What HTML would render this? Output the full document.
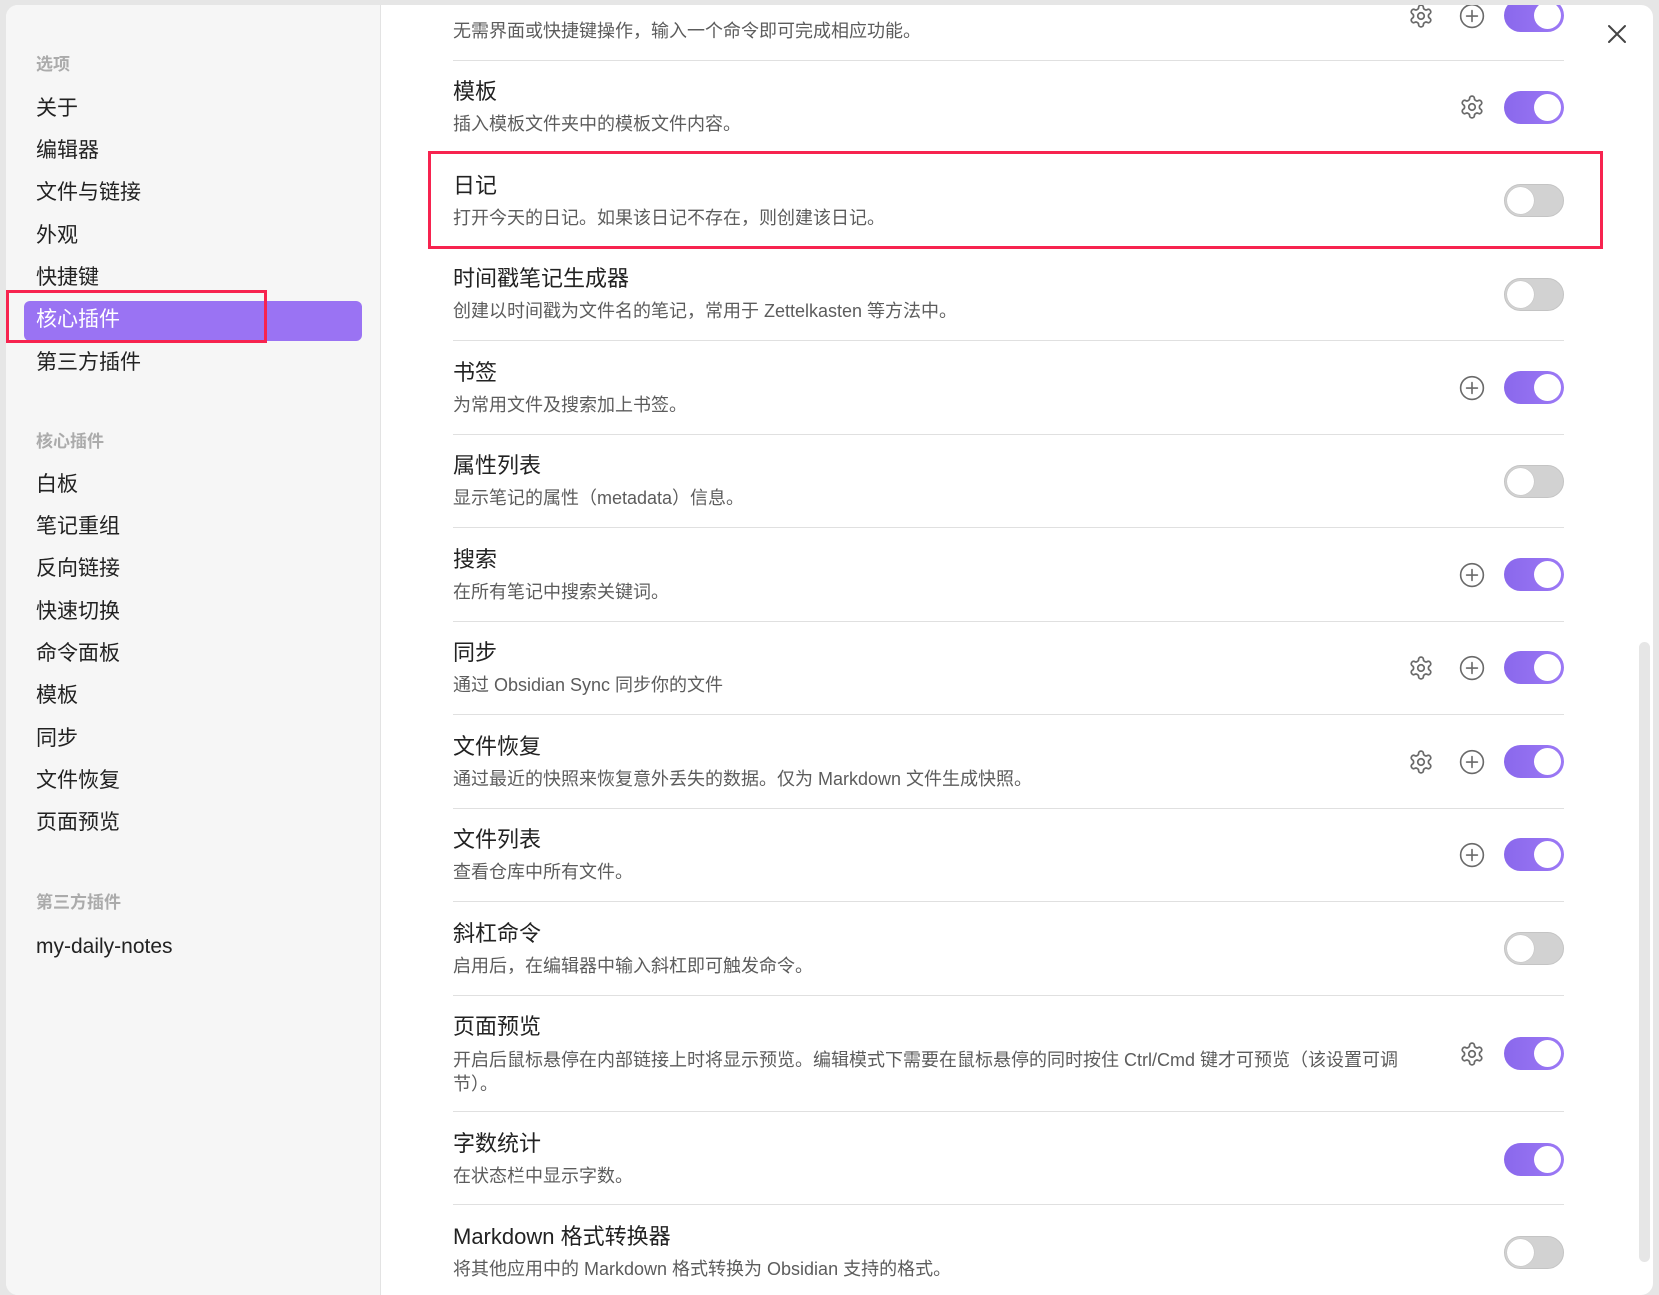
<!DOCTYPE html>
<html><head><meta charset="utf-8">
<style>
*{margin:0;padding:0;box-sizing:border-box}
body{width:1659px;height:1278px;background:#e6e6e6;font-family:"Liberation Sans","Noto Sans CJK SC",sans-serif;overflow:hidden;position:relative}
#modal{position:absolute;left:6px;top:5px;width:1647px;height:1290px;background:#fff;border-radius:12px;overflow:hidden}
#side{position:absolute;left:0;top:0;width:375px;height:100%;background:#f6f6f6;border-right:1px solid #e3e3e3}
.sh{position:absolute;left:30px;font-size:17px;font-weight:bold;color:#ababab;line-height:20px;margin-top:2px}
.si{position:absolute;left:30px;font-size:21px;color:#222;line-height:24px;margin-top:2px}
.act{position:absolute;left:18px;top:296px;width:338px;height:40px;background:#9a73f3;border-radius:6px}
.t{position:absolute;left:447px;font-size:22px;color:#222;line-height:26px;white-space:nowrap;margin-top:1px}
.d{position:absolute;left:447px;font-size:18px;color:#5c5c5c;line-height:24px;white-space:nowrap;margin-top:1px}
.sep{position:absolute;left:447px;width:1111px;height:1px;background:#e0e0e0}
.tg{position:absolute;left:1498px;width:60px;height:33px;border-radius:17px}
.on{background:linear-gradient(90deg,#8a68ec,#9c79f5)}
.on::after{content:"";position:absolute;right:3px;top:3px;width:27px;height:27px;border-radius:50%;background:#fff}
.off{background:#d2d2d2;border:1px solid #c4c4c4}
.off::after{content:"";position:absolute;left:2px;top:2px;width:27px;height:27px;border-radius:50%;background:#fff;box-shadow:0 0 1px #aaa}
.ic{position:absolute;width:26px;height:26px}
.red{position:absolute;border:3px solid #f7234f}
</style></head><body>
<div id="modal">
<div id="side">
<div class="sh" style="top:48px">选项</div>
<div class="si" style="top:90px">关于</div>
<div class="si" style="top:132px">编辑器</div>
<div class="si" style="top:174px">文件与链接</div>
<div class="si" style="top:217px">外观</div>
<div class="si" style="top:259px">快捷键</div>
<div class="act"></div>
<div class="si" style="top:301px;color:#fff">核心插件</div>
<div class="si" style="top:344px">第三方插件</div>
<div class="sh" style="top:425px">核心插件</div>
<div class="si" style="top:466px">白板</div>
<div class="si" style="top:508px">笔记重组</div>
<div class="si" style="top:550px">反向链接</div>
<div class="si" style="top:593px">快速切换</div>
<div class="si" style="top:635px">命令面板</div>
<div class="si" style="top:677px">模板</div>
<div class="si" style="top:720px">同步</div>
<div class="si" style="top:762px">文件恢复</div>
<div class="si" style="top:804px">页面预览</div>
<div class="sh" style="top:886px">第三方插件</div>
<div class="si" style="top:928px">my-daily-notes</div>
</div>

<svg width="0" height="0" style="position:absolute">
<symbol id="gear" viewBox="0 0 24 24"><path fill="none" stroke="#6a6a6a" stroke-width="1.6" stroke-linecap="round" stroke-linejoin="round" d="M12.22 2h-.44a2 2 0 0 0-2 2v.18a2 2 0 0 1-1 1.73l-.43.25a2 2 0 0 1-2 0l-.15-.08a2 2 0 0 0-2.730.73l-.22.38a2 2 0 0 0 .73 2.73l.15.1a2 2 0 0 1 1 1.72v.51a2 2 0 0 1-1 1.74l-.15.09a2 2 0 0 0-.73 2.73l.22.38a2 2 0 0 0 2.73.73l.15-.08a2 2 0 0 1 2 0l.43.25a2 2 0 0 1 1 1.73V20a2 2 0 0 0 2 2h.44a2 2 0 0 0 2-2v-.18a2 2 0 0 1 1-1.73l.43-.25a2 2 0 0 1 2 0l.15.08a2 2 0 0 0 2.73-.73l.22-.39a2 2 0 0 0-.73-2.730l-.15-.08a2 2 0 0 1-1-1.74v-.5a2 2 0 0 1 1-1.74l.15-.09a2 2 0 0 0 .73-2.73l-.22-.38a2 2 0 0 0-2.73-.73l-.15.08a2 2 0 0 1-2 0l-.43-.25a2 2 0 0 1-1-1.73V4a2 2 0 0 0-2-2z"/><circle cx="12" cy="12" r="3" fill="none" stroke="#6a6a6a" stroke-width="1.6"/></symbol>
<symbol id="plus" viewBox="0 0 24 24"><circle cx="12" cy="12" r="10.5" fill="none" stroke="#6a6a6a" stroke-width="1.5"/><path d="M12 7v10M7 12h10" stroke="#6a6a6a" stroke-width="1.5" stroke-linecap="round"/></symbol>
</svg>

<div class="d" style="top:13px">无需界面或快捷键操作，输入一个命令即可完成相应功能。</div>
<svg class="ic" style="left:1402px;top:-2px"><use href="#gear"/></svg>
<svg class="ic" style="left:1453px;top:-2px"><use href="#plus"/></svg>
<div class="tg on" style="top:-6px"></div>
<div class="sep" style="top:55px"></div>

<div class="t" style="top:73px">模板</div>
<div class="d" style="top:106px">插入模板文件夹中的模板文件内容。</div>
<svg class="ic" style="left:1453px;top:89px"><use href="#gear"/></svg>
<div class="tg on" style="top:86px"></div>
<div class="sep" style="top:148px"></div>

<div class="t" style="top:167px">日记</div>
<div class="d" style="top:200px">打开今天的日记。如果该日记不存在，则创建该日记。</div>
<div class="tg off" style="top:179px"></div>
<div class="sep" style="top:242px"></div>

<div class="t" style="top:260px">时间戳笔记生成器</div>
<div class="d" style="top:293px">创建以时间戳为文件名的笔记，常用于 Zettelkasten 等方法中。</div>
<div class="tg off" style="top:273px"></div>
<div class="sep" style="top:335px"></div>

<div class="t" style="top:354px">书签</div>
<div class="d" style="top:387px">为常用文件及搜索加上书签。</div>
<svg class="ic" style="left:1453px;top:370px"><use href="#plus"/></svg>
<div class="tg on" style="top:366px"></div>
<div class="sep" style="top:429px"></div>

<div class="t" style="top:447px">属性列表</div>
<div class="d" style="top:480px">显示笔记的属性（metadata）信息。</div>
<div class="tg off" style="top:460px"></div>
<div class="sep" style="top:522px"></div>

<div class="t" style="top:541px">搜索</div>
<div class="d" style="top:574px">在所有笔记中搜索关键词。</div>
<svg class="ic" style="left:1453px;top:557px"><use href="#plus"/></svg>
<div class="tg on" style="top:553px"></div>
<div class="sep" style="top:616px"></div>

<div class="t" style="top:634px">同步</div>
<div class="d" style="top:667px">通过 Obsidian Sync 同步你的文件</div>
<svg class="ic" style="left:1402px;top:650px"><use href="#gear"/></svg>
<svg class="ic" style="left:1453px;top:650px"><use href="#plus"/></svg>
<div class="tg on" style="top:646px"></div>
<div class="sep" style="top:709px"></div>

<div class="t" style="top:728px">文件恢复</div>
<div class="d" style="top:761px">通过最近的快照来恢复意外丢失的数据。仅为 Markdown 文件生成快照。</div>
<svg class="ic" style="left:1402px;top:744px"><use href="#gear"/></svg>
<svg class="ic" style="left:1453px;top:744px"><use href="#plus"/></svg>
<div class="tg on" style="top:740px"></div>
<div class="sep" style="top:803px"></div>

<div class="t" style="top:821px">文件列表</div>
<div class="d" style="top:854px">查看仓库中所有文件。</div>
<svg class="ic" style="left:1453px;top:837px"><use href="#plus"/></svg>
<div class="tg on" style="top:833px"></div>
<div class="sep" style="top:896px"></div>

<div class="t" style="top:915px">斜杠命令</div>
<div class="d" style="top:948px">启用后，在编辑器中输入斜杠即可触发命令。</div>
<div class="tg off" style="top:927px"></div>
<div class="sep" style="top:990px"></div>

<div class="t" style="top:1008px">页面预览</div>
<div class="d" style="top:1042px;white-space:normal;width:960px">开启后鼠标悬停在内部链接上时将显示预览。编辑模式下需要在鼠标悬停的同时按住 Ctrl/Cmd 键才可预览（该设置可调节）。</div>
<svg class="ic" style="left:1453px;top:1036px"><use href="#gear"/></svg>
<div class="tg on" style="top:1032px"></div>
<div class="sep" style="top:1106px"></div>

<div class="t" style="top:1125px">字数统计</div>
<div class="d" style="top:1158px">在状态栏中显示字数。</div>
<div class="tg on" style="top:1138px"></div>
<div class="sep" style="top:1199px"></div>

<div class="t" style="top:1218px">Markdown 格式转换器</div>
<div class="d" style="top:1251px">将其他应用中的 Markdown 格式转换为 Obsidian 支持的格式。</div>
<div class="tg off" style="top:1231px"></div>

<svg style="position:absolute;left:1600px;top:18px" width="22" height="22" viewBox="0 0 22 22"><path d="M3 3L19 19M19 3L3 19" stroke="#444" stroke-width="2" stroke-linecap="round"/></svg>
<div style="position:absolute;left:1633px;top:637px;width:11px;height:620px;background:#e6e6e6;border-radius:6px"></div>
</div>

<div class="red" style="left:6px;top:290px;width:261px;height:53px"></div>
<div class="red" style="left:428px;top:151px;width:1175px;height:98px"></div>
</body></html>
